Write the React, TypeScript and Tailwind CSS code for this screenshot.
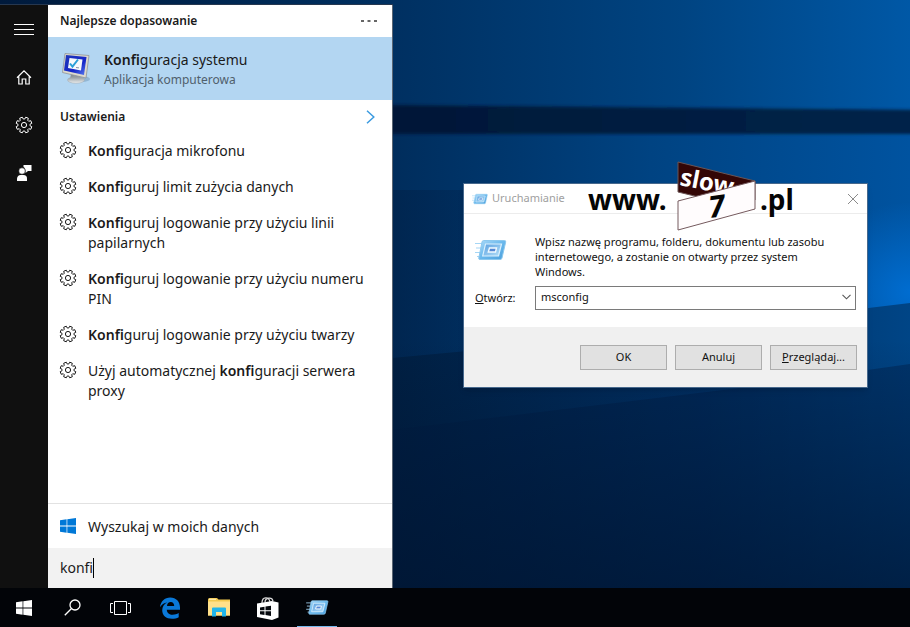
import { useState } from "react";
import type { ReactNode } from "react";

const gearPoints = Array.from({ length: 8 }, (_, i) => {
  const start = i * 45 + 22.5;
  return [
    [-16, 6],
    [-10, 8],
    [10, 8],
    [16, 6],
  ].map(([offset, radius]) => {
    const angle = ((start + offset) * Math.PI) / 180;
    return `${(9 + radius * Math.cos(angle)).toFixed(2)},${(9 + radius * Math.sin(angle)).toFixed(2)}`;
  });
})
  .flat()
  .join(" ");

const GearIcon = () => (
  <svg viewBox="0 0 18 18" className="size-[18px] shrink-0" fill="none" stroke="currentColor" strokeLinejoin="round">
    <polygon points={gearPoints} />
    <circle cx="9" cy="9" r="2.6" />
  </svg>
);

const WindowsIcon = ({ className }: { className: string }) => (
  <svg viewBox="0 0 16 16" className={className} fill="currentColor">
    <path d="M0 2.2 6.6 1.3V7.6H0zM7.3 1.2 16 0V7.6H7.3zM0 8.4H6.6V14.7L0 13.8zM7.3 8.4H16V16L7.3 14.8z" />
  </svg>
);

const RunIcon = ({ className }: { className: string }) => (
  <svg viewBox="0 0 32 24" className={className}>
    <defs>
      <linearGradient id="runFrame" x1="0" y1="0" x2="1" y2="1">
        <stop offset="0" stopColor="#a9d9f8" />
        <stop offset="0.5" stopColor="#6ab8ec" />
        <stop offset="1" stopColor="#4a9edb" />
      </linearGradient>
      <linearGradient id="runInner" x1="0" y1="0" x2="1" y2="1">
        <stop offset="0" stopColor="#5a9fe0" />
        <stop offset="1" stopColor="#b4e0f9" />
      </linearGradient>
    </defs>
    <path d="M0 5.5H9M1 10H8M0 14.5H7M2 18.5H6" stroke="#a5d6f5" strokeWidth="1.2" />
    <path d="M8.5 2.5H29.5Q31 2.5 30.7 4L27 20Q26.7 21.5 25 21.5H5Q3.5 21.5 3.8 20L7 4Q7.3 2.5 8.5 2.5Z" fill="url(#runFrame)" stroke="#8cc8ee" />
    <path d="M10.5 6H26.5L23.5 18H7.7Z" fill="url(#runInner)" stroke="#d9f0fd" strokeWidth="1.2" />
    <path d="M14.5 10H21.5L20.5 14H13.3Z" fill="#5588d4" stroke="#f1faff" strokeWidth="1.4" />
  </svg>
);

const MonitorIcon = () => (
  <svg viewBox="0 0 30 32" className="h-8 w-[30px] shrink-0">
    <defs>
      <linearGradient id="screen" x1="0" y1="0" x2="1" y2="1">
        <stop offset="0" stopColor="#2038b8" />
        <stop offset="0.6" stopColor="#1526c8" />
        <stop offset="1" stopColor="#5a7cf0" />
      </linearGradient>
      <linearGradient id="stand" x1="0" y1="0" x2="0" y2="1">
        <stop offset="0" stopColor="#8d9499" />
        <stop offset="1" stopColor="#eceff0" />
      </linearGradient>
    </defs>
    <ellipse cx="20" cy="26" rx="8" ry="3" fill="#7ba0bf" opacity="0.6" />
    <path d="M9 21 18 23 19 26 8 26Z" fill="#8b9297" />
    <ellipse cx="14" cy="27" rx="8.5" ry="3.3" fill="url(#stand)" stroke="#a3abb0" strokeWidth="0.5" />
    <path d="M3 0.500 27 2.500 24 25 0.500 19.500Z" fill="#dcd9ce" stroke="#8f9499" strokeWidth="0.8" />
    <path d="M4 2 24.500 4 22 22 2 17.500Z" fill="url(#screen)" />
    <path d="M7.500 5 20.500 6.500 19 17.500 6 15Z" fill="#f5f8fc" />
    <path d="m8 10.500 2.500 3.200 5.500-7.200" fill="none" stroke="#2a9fd8" strokeWidth="2" />
    <path d="m14 14.500 3 .4" stroke="#8494a8" />
  </svg>
);

const Wallpaper = () => (
  <svg viewBox="0 0 910 588" preserveAspectRatio="none" className="absolute inset-0 size-full">
    <defs>
      <linearGradient id="sky" x1="0" x2="1">
        <stop offset="0" stopColor="#001a3c" />
        <stop offset="0.43" stopColor="#003061" />
        <stop offset="0.75" stopColor="#004482" />
        <stop offset="1" stopColor="#0058a6" />
      </linearGradient>
      <linearGradient id="middle" gradientUnits="userSpaceOnUse" x1="392" x2="910">
        <stop offset="0" stopColor="#002d5c" />
        <stop offset="0.5" stopColor="#004382" />
        <stop offset="1" stopColor="#0053a0" />
      </linearGradient>
      <linearGradient id="bar" gradientUnits="userSpaceOnUse" x1="392" x2="910">
        <stop offset="0" stopColor="#001737" />
        <stop offset="1" stopColor="#002349" />
      </linearGradient>
      <linearGradient id="floor" gradientUnits="userSpaceOnUse" x1="392" x2="910">
        <stop offset="0" stopColor="#001f42" />
        <stop offset="0.6" stopColor="#003064" />
        <stop offset="1" stopColor="#004586" />
      </linearGradient>
      <linearGradient id="fade" x1="0" y1="0" x2="0" y2="1">
        <stop offset="0" stopColor="#00132e" stopOpacity="0" />
        <stop offset="1" stopColor="#00132e" stopOpacity="0.6" />
      </linearGradient>
      <linearGradient id="shade" gradientUnits="userSpaceOnUse" x1="392" x2="600">
        <stop offset="0" stopColor="#00183a" stopOpacity="0.35" />
        <stop offset="1" stopColor="#00183a" stopOpacity="0" />
      </linearGradient>
      <radialGradient id="glow">
        <stop offset="0" stopColor="#0073dc" stopOpacity="0.8" />
        <stop offset="1" stopColor="#0073dc" stopOpacity="0" />
      </radialGradient>
      <filter id="soft" x="-5%" y="-30%" width="110%" height="160%">
        <feGaussianBlur stdDeviation="1.5" />
      </filter>
    </defs>
    <rect width="910" height="588" fill="url(#sky)" />
    <rect y="130" width="910" height="250" fill="url(#middle)" />
    <rect y="190" width="910" height="170" fill="url(#shade)" />
    <ellipse cx="910" cy="292" rx="100" ry="90" fill="url(#glow)" />
    <path d="M-20 105H392L930 110V134H-20Z" fill="url(#bar)" filter="url(#soft)" />
    <path d="M0 358H392L650 334 910 303V588H0Z" fill="url(#floor)" />
    <path d="M392 430 740 388 910 364V588H392Z" fill="#001c42" opacity="0.4" />
    <rect y="340" width="910" height="248" fill="url(#fade)" />
  </svg>
);

const results: { id: string; label: ReactNode }[] = [
  { id: "mic", label: <><b className="font-semibold">Konfi</b>guracja mikrofonu</> },
  { id: "limit", label: <><b className="font-semibold">Konfi</b>guruj limit zużycia danych</> },
  { id: "finger", label: <><b className="font-semibold">Konfi</b>guruj logowanie przy użyciu linii papilarnych</> },
  { id: "pin", label: <><b className="font-semibold">Konfi</b>guruj logowanie przy użyciu numeru PIN</> },
  { id: "face", label: <><b className="font-semibold">Konfi</b>guruj logowanie przy użyciu twarzy</> },
  { id: "proxy", label: <>Użyj automatycznej <b className="font-semibold">konfi</b>guracji serwera proxy</> },
];

const SideRail = () => (
  <nav className="flex w-12 shrink-0 flex-col bg-[#101010] text-white">
    <button aria-label="Menu" className="flex h-12 items-center justify-center">
      <svg viewBox="0 0 20 12" className="h-3 w-5" stroke="currentColor">
        <path d="M0 1.5H20M0 6.5H20M0 11.5H20" />
      </svg>
    </button>
    <button aria-label="Strona główna" className="flex h-12 items-center justify-center">
      <svg viewBox="0 0 16 16" className="size-4" fill="none" stroke="currentColor" strokeWidth="1.2">
        <path d="M1 8.7 8 1.8 15 8.7M2.8 7.5V15H6.2V10H9.8V15H13.2V7.5" />
      </svg>
    </button>
    <button aria-label="Ustawienia" className="flex h-12 items-center justify-center">
      <GearIcon />
    </button>
    <button aria-label="Opinie" className="flex h-12 items-center justify-center">
      <svg viewBox="0 0 16 18" className="h-[18px] w-4" fill="currentColor">
        <path d="M7.5 1H15.5V7H12L9.5 9V6Q9 3.5 7.5 3Z" />
        <circle cx="6" cy="7" r="3.2" stroke="#101010" strokeWidth=".5" />
        <path d="M1 17V14.5Q1.5 11 4.5 11H7.5Q11 11 11 14.5V17Z" />
      </svg>
    </button>
  </nav>
);

const SearchPanel = () => {
  const [query, setQuery] = useState("konfi");

  return (
    <section className="flex w-[345px] flex-col border-r border-[#5b6673] bg-white text-[#1a1a1a]">
      <header className="flex h-8 items-center justify-between pr-[14px] pl-3">
        <h2 className="text-[12px] font-semibold">Najlepsze dopasowanie</h2>
        <button aria-label="Więcej">
          <svg viewBox="0 0 17 3" className="h-[3px] w-[17px]" fill="#666">
            <path d="M0 0H3V2H0zM6.5 0H9.5V2H6.5zM13 0H16V2H13z" />
          </svg>
        </button>
      </header>
      <button className="flex h-[63px] items-center gap-3 bg-[#b3d6f2] pr-3 pl-[14px] text-left">
        <MonitorIcon />
        <span className="flex flex-col pt-[2px]">
          <span className="text-[14px] leading-5"><b className="font-semibold">Konfi</b>guracja systemu</span>
          <span className="text-[12px] leading-5 text-[#50606c]">Aplikacja komputerowa</span>
        </span>
      </button>
      <div className="flex h-[33px] items-center justify-between pr-[17px] pl-3">
        <h2 className="text-[12px] font-semibold">Ustawienia</h2>
        <button aria-label="Pokaż ustawienia">
          <svg viewBox="0 0 9 14" className="h-[14px] w-[9px]" fill="none" stroke="#3c9be0" strokeWidth="1.5">
            <path d="m1 .8 6.8 6.2L1 13.2" />
          </svg>
        </button>
      </div>
      <ul className="flex-1">
        {results.map(({ id, label }) => (
          <li key={id}>
            <button className="flex w-full items-start gap-[11px] py-2 pr-6 pl-[11px] text-left text-[14px] leading-5">
              <GearIcon />
              <span>{label}</span>
            </button>
          </li>
        ))}
      </ul>
      <button className="flex h-[45px] items-center gap-3 border-t border-[#e2e2e2] pl-3 text-[14px]">
        <WindowsIcon className="size-4 text-[#0078d7]" />
        Wyszukaj w moich danych
      </button>
      <div className="flex h-10 items-center bg-[#f2f2f2] px-3">
        <input
          autoFocus
          aria-label="Wyszukaj"
          value={query}
          onChange={(e) => setQuery(e.target.value)}
          className="field-sizing-content border-r border-black text-[14px] leading-5 caret-transparent outline-none"
        />
      </div>
    </section>
  );
};

const Watermark = () => (
  <svg viewBox="0 0 210 72" className="absolute -top-[23px] left-[123px] h-[72px] w-[210px]" fontFamily="Noto Sans, Open Sans, sans-serif" fontWeight="700">
    <text x="1" y="49" fontSize="28" fill="#050505">www.</text>
    <path d="M91 1 168 20V39L145 44 91 31Z" fill="#330606" stroke="#6b5555" />
    <text x="92" y="24" fontSize="24" fill="#fff" transform="rotate(11 92 24)">slow</text>
    <path d="M91 40 168 20V48L91 69Z" fill="#fffcfd" stroke="#755a5e" />
    <text x="123" y="57" fontSize="30" fontStyle="italic" fill="#050505" transform="rotate(-8 123 57)">7</text>
    <text x="173" y="49" fontSize="28" fill="#050505">.pl</text>
  </svg>
);

const RunDialog = () => {
  const [command, setCommand] = useState("msconfig");

  return (
    <section role="dialog" aria-labelledby="run-title" className="absolute top-[183px] left-[463px] w-[405px] border border-[#46688c] bg-white text-[11px] text-[#111] shadow-md">
      <header className="flex h-[30px] items-center gap-1 border-b border-[#ececec] px-2">
        <RunIcon className="h-3 w-4" />
        <h1 id="run-title" className="flex-1 text-[11px] text-[#a0a0a0]">Uruchamianie</h1>
        <button aria-label="Zamknij">
          <svg viewBox="0 0 12 12" className="size-3" stroke="#8a8a8a">
            <path d="m1 1 10 10M11 1 1 11" />
          </svg>
        </button>
      </header>
      <Watermark />
      <div className="flex gap-7 pt-5 pr-[11px] pl-[11px]">
        <RunIcon className="mt-1 h-6 w-8" />
        <p className="flex-1 pr-4 leading-[15px]">
          Wpisz nazwę programu, folderu, dokumentu lub zasobu internetowego, a zostanie on otwarty przez system Windows.
        </p>
      </div>
      <div className="flex items-center pt-[7px] pr-[11px] pb-[17px] pl-[11px]">
        <label htmlFor="command" className="w-[60px]"><u>O</u>twórz:</label>
        <div className="flex h-6 flex-1 items-center border border-[#7a7a7a] pr-1 pb-[2px] pl-[5px]">
          <input
            id="command"
            value={command}
            onChange={(e) => setCommand(e.target.value)}
            className="min-w-0 flex-1 outline-none"
          />
          <button aria-label="Historia poleceń">
            <svg viewBox="0 0 9 6" className="h-[6px] w-[9px]" fill="none" stroke="#555" strokeWidth="1.1">
              <path d="m.5.8 4 4 4-4" />
            </svg>
          </button>
        </div>
      </div>
      <footer className="flex justify-end gap-2 bg-[#f0f0f0] pt-[18px] pr-[10px] pb-[17px]">
        <button className="h-[25px] w-[87px] border border-[#adadad] bg-[#e1e1e1]">OK</button>
        <button className="h-[25px] w-[87px] border border-[#adadad] bg-[#e1e1e1]">Anuluj</button>
        <button className="h-[25px] w-[87px] border border-[#adadad] bg-[#e1e1e1]"><u>P</u>rzeglądaj...</button>
      </footer>
    </section>
  );
};

const Taskbar = () => (
  <footer className="flex h-[39px] shrink-0 bg-[#020408] text-white">
    <button aria-label="Start" className="flex w-12 items-center justify-center">
      <WindowsIcon className="size-4" />
    </button>
    <button aria-label="Wyszukaj" className="flex w-12 items-center justify-center">
      <svg viewBox="0 0 17 17" className="size-[17px]" fill="none" stroke="currentColor" strokeWidth="1.3">
        <circle cx="11" cy="6" r="5" />
        <path d="M7.5 9.5.8 16.2" />
      </svg>
    </button>
    <button aria-label="Widok zadań" className="flex w-12 items-center justify-center">
      <svg viewBox="0 0 21 16" className="h-4 w-[21px]" fill="none" stroke="currentColor">
        <path d="M4.5 1.5H16.5V14.5H4.5ZM3 3.5H.5V12.5H3M18 3.5H20.5V12.5H18" />
      </svg>
    </button>
    <button aria-label="Microsoft Edge" className="flex w-[52px] items-center justify-center">
      <svg viewBox="0 0 20 22" className="h-[22px] w-5" fill="#0a78d8">
        <path d="M0 10.2C.7 4.3 4.5.5 10.2.5 16.2.5 20 4.7 20 10.5V12.7H6.8C7 16 9.5 17.7 12.5 17.7 15 17.7 17 17 18.7 16V20.2C16.8 21.2 14.5 21.7 12 21.7 6 21.7 2.2 18.2 2.2 13.2 2.2 9.7 4.2 7 7.2 5.5 4 5.7 1.5 7.7 0 10.2ZM7 9H14.2C14.2 6.7 13 5 10.7 5 8.6 5 7.2 6.6 7 9Z" />
      </svg>
    </button>
    <button aria-label="Eksplorator plików" className="flex w-[46px] items-center justify-center">
      <svg viewBox="0 0 22 19" className="h-[19px] w-[22px]">
        <path d="M0 1.5Q0 0 1.5 0H9L10.5 1.5H22V17.5H0Z" fill="#f3c94f" />
        <path d="M0 3.5H22V17.5H0Z" fill="#ffe08a" />
        <path d="M1 1.3H8" stroke="#fff2c0" />
        <path d="M4 10.5Q4 9.500 5 9.500H17Q18 9.500 18 10.500V18.500H14V14H8V18.500H4Z" fill="#21b5ea" />
      </svg>
    </button>
    <button aria-label="Sklep" className="flex w-[52px] items-center justify-center">
      <svg viewBox="0 0 22 24" className="h-6 w-[22px]">
        <path d="M5 7C5 .3 12 .2 13 6M8 6.5C8 1.5 15 .5 16 5" fill="none" stroke="#d8d8d8" strokeWidth="1.3" />
        <path d="M0 7.5 15 5 21.5 6.5V21.5L15 24 0 21Z" fill="#fff" />
        <path d="M3 11.5 7.5 10.8V14.3H3zM8.5 10.6 14 9.7V14.3H8.5zM3 15.2H7.5V19L3 18.2zM8.5 15.2H14V20L8.5 19.1z" fill="#05080d" />
      </svg>
    </button>
    <button aria-label="Uruchamianie" className="ml-[3px] flex w-10 items-center justify-center border-b border-[#76b9ed]">
      <RunIcon className="h-[17px] w-[23px]" />
    </button>
  </footer>
);

export default function App() {
  return (
    <div className="flex h-screen flex-col overflow-hidden font-['Noto_Sans','Open_Sans',sans-serif]">
      <main className="relative flex min-h-0 flex-1">
        <Wallpaper />
        <div className="relative mt-1 flex border-t border-[#26374f]">
          <SideRail />
          <SearchPanel />
        </div>
        <RunDialog />
      </main>
      <Taskbar />
    </div>
  );
}
